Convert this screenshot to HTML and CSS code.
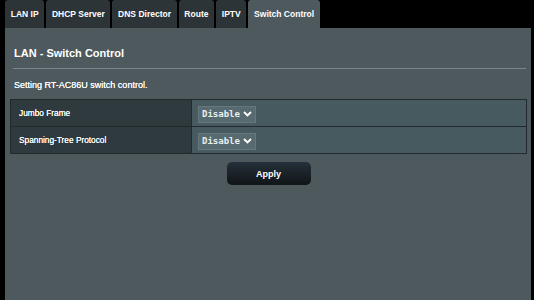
FILE: index.html
```html
<!DOCTYPE html>
<html lang="en">
<head>
    <meta charset="UTF-8">
    <title>LAN - Switch Control</title>
    <link rel="stylesheet" href="styles.css">
</head>
<body>

<div class="tabs">
    <div class="tab">LAN IP</div>
    <div class="tab">DHCP Server</div>
    <div class="tab">DNS Director</div>
    <div class="tab">Route</div>
    <div class="tab">IPTV</div>
    <div class="tab active">Switch Control</div>
</div>

<div class="panel">
    <div class="title">LAN - Switch Control</div>
    <div class="divider"></div>
    <div class="desc">Setting RT-AC86U switch control.</div>

    <table class="form-table">
        <tr>
            <th>Jumbo Frame</th>
            <td>
                <div class="select">Disable
                    <svg width="9" height="6" viewBox="0 0 9 6"><path d="M1 1 L4.5 4.5 L8 1" fill="none" stroke="#fff" stroke-width="1.8"/></svg>
                </div>
            </td>
        </tr>
        <tr>
            <th>Spanning-Tree Protocol</th>
            <td>
                <div class="select">Disable
                    <svg width="9" height="6" viewBox="0 0 9 6"><path d="M1 1 L4.5 4.5 L8 1" fill="none" stroke="#fff" stroke-width="1.8"/></svg>
                </div>
            </td>
        </tr>
    </table>

    <div class="actions">
        <button class="apply">Apply</button>
    </div>
</div>

</body>
</html>
```

FILE: styles.css
```css
body {
    margin: 0;
    padding: 0 3px 0 5px;
    background-color: #000;
    font-family: "Liberation Sans", Arial, sans-serif;
    color: #fff;
    height: 300px;
    overflow: hidden;
}
.tabs {
    display: flex;
    gap: 2px;
    height: 28px;
}
.tab {
    background-color: #2c3437;
    color: #fff;
    font-size: 8.5px;
    font-weight: bold;
    padding: 0 5.7px;
    display: flex;
    align-items: center;
    border-radius: 3px 3px 0 0;
}
.tab.active {
    background-color: #4d595d;
}
.panel {
    background-color: #4d595d;
    height: 272px;
    padding: 0 4px 0 5px;
}
.title {
    font-size: 11px;
    font-weight: bold;
    padding: 19px 0 0 4px;
    height: 21px;
}
.divider {
    height: 1px;
    background-color: #7a868a;
    margin: 0 1px 0 3px;
}
.desc {
    font-size: 9px;
    padding: 11px 0 0 4px;
    height: 19px;
    text-shadow: 0 0 0.3px #fff;
}
.form-table {
    width: 100%;
    border-collapse: collapse;
    border: 1px solid #222a2d;
}
.form-table th {
    background-color: #2f3a3e;
    text-align: left;
    font-size: 8.3px;
    font-weight: normal;
    padding: 0 8px;
    width: 164px;
    height: 26px;
    border: 1px solid #222a2d;
    text-shadow: 0 0 0.3px #fff;
}
.form-table td {
    background-color: #475a5f;
    padding: 0 6px;
    border: 1px solid #222a2d;
}
.select {
    display: inline-flex;
    align-items: center;
    gap: 3px;
    height: 15px;
    padding: 0 3px;
    border: 1px solid #67777b;
    background-color: #576a6f;
    font-family: "DejaVu Sans Mono", monospace;
    font-size: 9px;
    font-weight: bold;
    color: #e8f0f0;
}
.actions {
    text-align: center;
    padding-top: 8px;
}
.apply {
    width: 84px;
    height: 23px;
    border: none;
    border-radius: 5px;
    background: linear-gradient(#25303a, #101416);
    color: #fff;
    font-family: "Liberation Sans", Arial, sans-serif;
    font-size: 9px;
    font-weight: bold;
    cursor: pointer;
}
```
